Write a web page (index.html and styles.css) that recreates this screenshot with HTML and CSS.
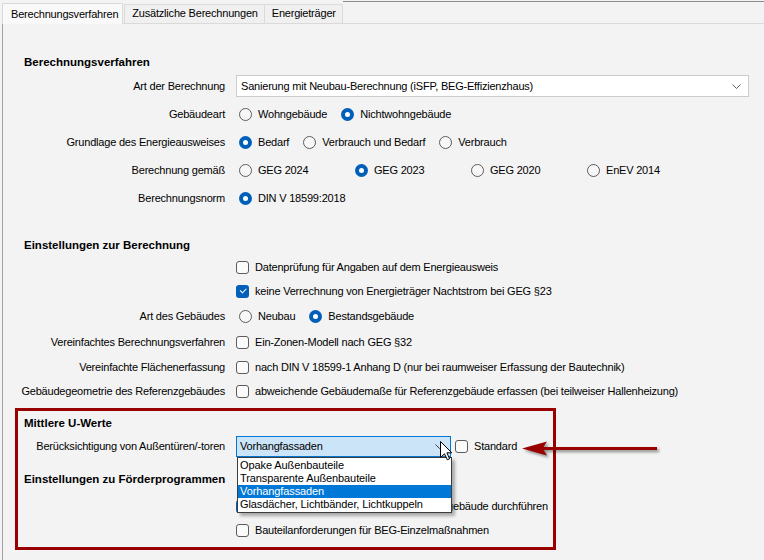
FILE: index.html
```html
<!DOCTYPE html>
<html lang="de">
<head>
    <meta charset="UTF-8">
    <title>Berechnungsverfahren</title>
    <link rel="stylesheet" href="styles.css">
</head>
<body>
<div class="window">
    <div class="tabstrip">
        <div class="tab active">Berechnungsverfahren</div>
        <div class="tab">Zusätzliche Berechnungen</div>
        <div class="tab">Energieträger</div>
        <div class="tab-fill"></div>
    </div>

    <div class="page">
        <!-- Berechnungsverfahren -->
        <section class="group first">
            <h2>Berechnungsverfahren</h2>
            <div class="row">
                <span class="caption">Art der Berechnung</span>
                <div class="combo wide">
                    <span>Sanierung mit Neubau-Berechnung (iSFP, BEG-Effizienzhaus)</span>
                    <svg class="chevron" width="9" height="5" viewBox="0 0 9 5"><polyline points="0.5,0.5 4.5,4.5 8.5,0.5" fill="none" stroke="#606060"/></svg>
                </div>
            </div>
            <div class="row">
                <span class="caption">Gebäudeart</span>
                <div class="options">
                    <span class="opt"><i class="radio"></i>Wohngebäude</span>
                    <span class="opt"><i class="radio on"></i>Nichtwohngebäude</span>
                </div>
            </div>
            <div class="row">
                <span class="caption">Grundlage des Energieausweises</span>
                <div class="options">
                    <span class="opt"><i class="radio on"></i>Bedarf</span>
                    <span class="opt"><i class="radio"></i>Verbrauch und Bedarf</span>
                    <span class="opt"><i class="radio"></i>Verbrauch</span>
                </div>
            </div>
            <div class="row">
                <span class="caption">Berechnung gemäß</span>
                <div class="options cols">
                    <span class="opt"><i class="radio"></i>GEG 2024</span>
                    <span class="opt"><i class="radio on"></i>GEG 2023</span>
                    <span class="opt"><i class="radio"></i>GEG 2020</span>
                    <span class="opt"><i class="radio"></i>EnEV 2014</span>
                </div>
            </div>
            <div class="row">
                <span class="caption">Berechnungsnorm</span>
                <div class="options">
                    <span class="opt"><i class="radio on"></i>DIN V 18599:2018</span>
                </div>
            </div>
        </section>

        <!-- Einstellungen zur Berechnung -->
        <section class="group second">
            <h2>Einstellungen zur Berechnung</h2>
            <div class="row short">
                <span class="caption"></span>
                <span class="opt"><i class="check"></i>Datenprüfung für Angaben auf dem Energieausweis</span>
            </div>
            <div class="row short">
                <span class="caption"></span>
                <span class="opt"><i class="check on"></i>keine Verrechnung von Energieträger Nachtstrom bei GEG §23</span>
            </div>
            <div class="row mid">
                <span class="caption">Art des Gebäudes</span>
                <div class="options">
                    <span class="opt"><i class="radio"></i>Neubau</span>
                    <span class="opt"><i class="radio on"></i>Bestandsgebäude</span>
                </div>
            </div>
            <div class="row mid">
                <span class="caption">Vereinfachtes Berechnungsverfahren</span>
                <span class="opt"><i class="check"></i>Ein-Zonen-Modell nach GEG §32</span>
            </div>
            <div class="row short">
                <span class="caption">Vereinfachte Flächenerfassung</span>
                <span class="opt"><i class="check"></i>nach DIN V 18599-1 Anhang D (nur bei raumweiser Erfassung der Bautechnik)</span>
            </div>
            <div class="row short">
                <span class="caption">Gebäudegeometrie des Referenzgebäudes</span>
                <span class="opt"><i class="check"></i>abweichende Gebäudemaße für Referenzgebäude erfassen (bei teilweiser Hallenheizung)</span>
            </div>
        </section>

        <!-- markierter Bereich -->
        <section class="group marked">
            <h2>Mittlere U-Werte</h2>
            <div class="row mid">
                <span class="caption">Berücksichtigung von Außentüren/-toren</span>
                <div class="options">
                    <div class="combo small open">
                        <span>Vorhangfassaden</span>
                        <svg class="chevron" width="9" height="5" viewBox="0 0 9 5"><polyline points="0.5,0.5 4.5,4.5 8.5,0.5" fill="none" stroke="#404040"/></svg>
                        <ul class="droplist">
                            <li>Opake Außenbauteile</li>
                            <li>Transparente Außenbauteile</li>
                            <li class="selected">Vorhangfassaden</li>
                            <li>Glasdächer, Lichtbänder, Lichtkuppeln</li>
                        </ul>
                    </div>
                    <span class="opt std"><i class="check"></i>Standard</span>
                </div>
            </div>
            <h2 class="sub">Einstellungen zu Förderprogrammen</h2>
            <div class="row short">
                <span class="caption"></span>
                <span class="opt"><i class="check on"></i>Prüfung mit BEG-Effizienzhaus-Referenzgebäude durchführen</span>
            </div>
            <div class="row short">
                <span class="caption"></span>
                <span class="opt"><i class="check"></i>Bauteilanforderungen für BEG-Einzelmaßnahmen</span>
            </div>
        </section>
    </div>

    <!-- Hinweispfeil und Mauszeiger -->
    <svg class="pointer-arrow" width="145" height="24" viewBox="0 0 145 24">
        <path d="M4 10.5 L29 3.5 L25.5 9 L139 9 L139 12 L25.5 12 L29 17.5 Z" fill="#990000"/>
    </svg>
    <svg class="cursor" width="13" height="20" viewBox="0 0 13 20">
        <path d="M0.5 0.5 L0.5 16.5 L4.5 12.8 L7.3 18.8 L9.6 17.8 L6.9 11.8 L11.8 11.8 Z" fill="#fff" stroke="#000" stroke-width="1" stroke-linejoin="round"/>
    </svg>
</div>
</body>
</html>
```

FILE: styles.css
```css
/* Grundeinstellungen */
body {
    margin: 0;
    background: #f3f3f3;
    font-family: "Liberation Sans", Arial, sans-serif;
    font-size: 11px;
    letter-spacing: -0.2px;
    color: #000;
}

.window {
    position: relative;
    width: 764px;
    height: 560px;
    overflow: hidden;
}

/* Registerkarten */
.tabstrip {
    display: flex;
    align-items: flex-end;
    height: 23px;
    padding-left: 2px;
}

.tab {
    height: 18px;
    line-height: 17px;
    padding: 0 6px 0 7px;
    background: #f0f0f0;
    border: 1px solid #dadada;
    border-bottom: none;
    margin-left: -1px;
    white-space: nowrap;
}

.tab.active {
    height: 20px;
    line-height: 21px;
    padding: 0 4px 0 8px;
    margin-left: 0;
    margin-right: 2px;
    background: #f9f9f9;
    position: relative;
    top: 1px;
}

.tab-fill {
    flex: 1;
    align-self: stretch;
    border-top: 1px solid #8c8c8c;
    margin-top: 1px;
}

/* Seite */
.page {
    margin-left: 2px;
    border-left: 1px solid #a0a0a0;
    border-top: 1px solid #dadada;
    padding-left: 17px;
    height: 540px;
}

.group h2 {
    margin: 0;
    height: 20px;
    line-height: 20px;
    padding-left: 4px;
    font-size: 11.5px;
    font-weight: bold;
    letter-spacing: 0;
}

.group.first {
    padding-top: 28px;
}

.group.second {
    margin-top: 23px;
}

.row {
    display: grid;
    grid-template-columns: 205px 1fr;
    column-gap: 11px;
    align-items: center;
    height: 28px;
    white-space: nowrap;
}

.row.short {
    height: 24px;
}

.row.mid {
    height: 26px;
}

.caption {
    justify-self: end;
}

.options {
    display: flex;
    align-items: center;
    gap: 11px;
}

.options.cols {
    display: grid;
    grid-template-columns: repeat(4, 116px);
    gap: 0;
}

.opt {
    display: flex;
    align-items: center;
    gap: 6px;
}

/* Optionsfelder */
.radio {
    position: relative;
    width: 11px;
    height: 11px;
    margin-left: 3px;
    border: 1px solid #5c5c5c;
    border-radius: 50%;
    background: #f7f7f7;
}

.radio.on {
    width: 13px;
    height: 13px;
    border: none;
    background: #005fb8;
}

.radio.on::after {
    content: "";
    position: absolute;
    left: 4px;
    top: 4px;
    width: 5px;
    height: 5px;
    border-radius: 50%;
    background: #fff;
}

/* Kontrollkästchen */
.check {
    position: relative;
    width: 11px;
    height: 11px;
    border: 1px solid #5c5c5c;
    border-radius: 3px;
    background: #fbfbfb;
}

.check.on {
    width: 13px;
    height: 13px;
    border: none;
    background: #005fb8;
}

.check.on::after {
    content: "";
    position: absolute;
    left: 3.5px;
    top: 3.5px;
    width: 5px;
    height: 2.5px;
    border-left: 1px solid #fff;
    border-bottom: 1px solid #fff;
    transform: rotate(-45deg);
}

/* Kombinationsfelder */
.combo {
    position: relative;
    display: flex;
    align-items: center;
    justify-content: space-between;
    box-sizing: border-box;
    background: #fff;
    border: 1px solid #cccccc;
    padding: 0 7px 0 4px;
}

.combo.wide {
    width: 513px;
    height: 22px;
}

.combo.small {
    width: 215px;
    height: 21px;
    background: #cce4f7;
    border-color: #0078d7;
    padding-left: 3px;
    padding-right: 6px;
}

.droplist {
    position: absolute;
    left: 0;
    top: 20px;
    width: 215px;
    box-sizing: border-box;
    margin: 0;
    padding: 1px 0;
    list-style: none;
    background: #fff;
    border: 1px solid #3c3c3c;
    box-shadow: 3px 3px 3px rgba(0, 0, 0, 0.3);
    z-index: 2;
}

.droplist li {
    height: 13px;
    line-height: 13px;
    padding-left: 2px;
    letter-spacing: -0.1px;
}

.droplist li.selected {
    background: #0078d7;
    color: #fff;
}

.opt.std {
    margin-left: -7px;
}

/* roter Rahmen */
.group.marked {
    width: 541px;
    box-sizing: border-box;
    margin: 5px 0 0 -5px;
    padding: 2px 0 5px 2px;
    border: 3px solid #990000;
}

.group h2.sub {
    margin: 10px 0 5px;
}

/* Überlagerungen */
.pointer-arrow {
    position: absolute;
    left: 518px;
    top: 438px;
    filter: drop-shadow(2px 2px 1.5px rgba(0, 0, 0, 0.45));
    z-index: 3;
}

.cursor {
    position: absolute;
    left: 440px;
    top: 441px;
    z-index: 4;
}
```
